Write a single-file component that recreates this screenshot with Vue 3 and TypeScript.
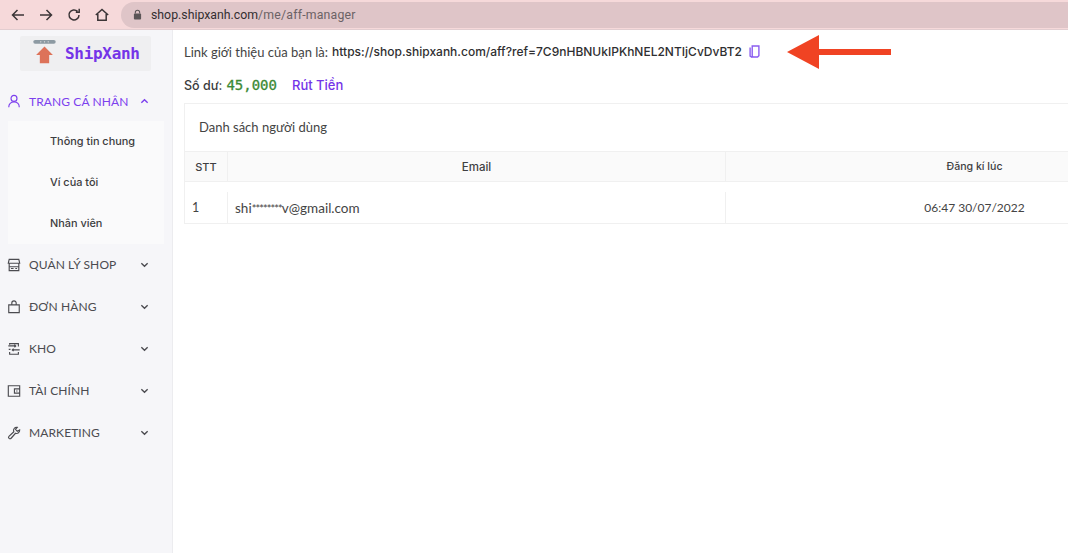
<script setup lang="ts">
const subItems: string[] = ['Thông tin chung', 'Ví của tôi', 'Nhân viên']
const menus: { label: string; icon: string }[] = [
  { label: 'QUẢN LÝ SHOP', icon: 'shop' },
  { label: 'ĐƠN HÀNG', icon: 'bag' },
  { label: 'KHO', icon: 'kho' },
  { label: 'TÀI CHÍNH', icon: 'wallet' },
  { label: 'MARKETING', icon: 'tool' },
]
</script>

<template>
  <div class="page">
    <header class="browser">
      <div class="navs">
        <svg class="nav" viewBox="0 0 16 16"><path d="M14 8H3M7.5 3 2.5 8l5 5" /></svg>
        <svg class="nav" viewBox="0 0 16 16"><path d="M2 8h11M8.5 3l5 5-5 5" /></svg>
        <svg class="nav" viewBox="0 0 16 16"><path d="M13 8a5 5 0 1 1-1.5-3.6M13.2 1.8v3.4H9.8" /></svg>
        <svg class="nav" viewBox="0 0 16 16"><path d="M1.8 8 8 2.5 14.2 8M3.8 7v6.2h8.4V7" /></svg>
      </div>
      <div class="url">
        <svg class="lock" viewBox="0 0 10 12"><path d="M2.6 5V3.6a2.4 2.4 0 0 1 4.8 0V5" fill="none" stroke="#5b5557" stroke-width="1.2" /><rect x="1" y="5" width="8" height="6.5" rx="1" fill="#5b5557" /></svg>
        <span class="host">shop.shipxanh.com</span><span class="path">/me/aff-manager</span>
      </div>
    </header>

    <div class="body">
      <aside class="sidebar">
        <div class="logo">
          <svg class="logo-mark" viewBox="0 0 24 30">
            <rect x="0" y="0" width="24" height="4" rx="2" fill="#8d9aa3" />
            <circle cx="8" cy="2" r=".7" fill="#e8e8e8" /><circle cx="12" cy="2" r=".7" fill="#e8e8e8" /><circle cx="16" cy="2" r=".7" fill="#e8e8e8" />
            <path d="M12 7 21 16H17V25H7V16H3Z" fill="#dd7259" />
          </svg>
          <span class="logo-text">ShipXanh</span>
        </div>

        <nav class="menu">
          <div class="item active">
            <svg class="ic" viewBox="0 0 16 16"><circle cx="8" cy="5" r="3.4" /><path d="M2 15c0-3.700 2.400-5.800 6-5.800s6 2.100 6 5.800" /></svg>
            <span class="label">TRANG CÁ NHÂN</span>
            <svg class="chev" viewBox="0 0 10 10"><path d="M1.500 6.500 5 3l3.500 3.500" /></svg>
          </div>
          <div class="sub">
            <div v-for="s in subItems" :key="s" class="sub-item">{{ s }}</div>
          </div>
          <div v-for="m in menus" :key="m.label" class="item">
            <svg class="ic" viewBox="0 0 16 16">
              <template v-if="m.icon === 'shop'">
                <path d="M2.500 1.500h11l1 4.500h-13zM2.500 6v8.500h11V6M2.500 10h11M4.500 12h3M9.500 12h2" />
              </template>
              <template v-else-if="m.icon === 'bag'">
                <path d="M2 5.500h12v9H2zM5.500 5.500V3.500a2.500 2.500 0 0 1 5 0v2" />
              </template>
              <template v-else-if="m.icon === 'kho'">
                <path d="M3 3V1.800h10V5M1.500 4.500h8.500M8.500 3l1.500 1.500L8.500 6M14.500 9H6M7.500 7.500 6 9l1.500 1.500M2 8.500h2M3 11.500v2.500h10v-2.500" />
              </template>
              <template v-else-if="m.icon === 'wallet'">
                <path d="M1.500 2h13v12h-13zM14.500 5.500H8.500v5h6M10.500 8h1.500" />
              </template>
              <template v-else>
                <path d="M14.500 4.500a3.600 3.600 0 0 1-4.800 3.800L4.700 14a1.600 1.600 0 0 1-2.500-2.200l5.600-5.200A3.600 3.600 0 0 1 11.700 1.500L9.700 3.800l2 2.200Z" />
              </template>
            </svg>
            <span class="label">{{ m.label }}</span>
            <svg class="chev" viewBox="0 0 10 10"><path d="M1.500 3.500 5 7l3.500-3.500" /></svg>
          </div>
        </nav>
      </aside>

      <main class="main">
        <div class="link-row">
          <span class="link-label">Link giới thiệu của bạn là:</span>
          <span class="link-url">https://shop.shipxanh.com/aff?ref=7C9nHBNUkIPKhNEL2NTIjCvDvBT2</span>
          <svg class="copy" viewBox="0 0 12 14"><path d="M3.500 1H10.800V11.500L9.300 13H4.500L3.500 12ZM1.200 2.500V12L3.500 13.500" /></svg>
          <svg class="arrow" viewBox="0 0 104 34"><path d="M0 17 32 0V14H104V20H32V34Z" /></svg>
        </div>

        <div class="balance">
          <span class="bal-label">Số dư:</span>
          <span class="bal-value">45,000</span>
          <span class="withdraw">Rút Tiền</span>
        </div>

        <section class="card">
          <div class="card-title">Danh sách người dùng</div>
          <div class="tbl">
            <div class="row head">
              <div class="c c1">STT</div>
              <div class="c c2">Email</div>
              <div class="c c3">Đăng kí lúc</div>
            </div>
            <div class="row data">
              <div class="c c1">1</div>
              <div class="c c2"><span>shi<span class="stars">********</span>v@gmail.com</span></div>
              <div class="c c3">06:47 30/07/2022</div>
            </div>
          </div>
        </section>
      </main>
    </div>
  </div>
</template>

<style>
html, body { margin: 0; background: #fff; overflow: hidden; }
</style>

<style scoped>
.page {
  width: 1068px;
  height: 553px;
  overflow: hidden;
  display: flex;
  flex-direction: column;
  font-family: "Inter", "Liberation Sans", sans-serif;
  color: #3a3a3c;
}
.browser {
  height: 30px;
  flex: none;
  box-sizing: border-box;
  display: flex;
  align-items: center;
  background: #f6d9da;
  border-bottom: 1px solid #e2cdd0;
  padding-left: 10px;
}
.navs { display: flex; gap: 12px; }
.nav { width: 16px; height: 16px; fill: none; stroke: #3b3537; stroke-width: 1.5; }
.url {
  margin-left: 11px;
  flex: 1;
  height: 26px;
  border-radius: 13px 0 0 13px;
  background: #dfc5c8;
  display: flex;
  align-items: center;
  padding-left: 12px;
  font-size: 12.300px;
  font-family: "Roboto", sans-serif;
}
.lock { width: 9px; height: 11px; margin-right: 9px; }
.host { color: #332e30; }
.path { color: #6b6265; letter-spacing: .2px; }
.body { flex: 1; display: flex; min-height: 0; }
.sidebar {
  width: 173px;
  flex: none;
  box-sizing: border-box;
  background: #f6f6f9;
  border-right: 1px solid #ececef;
  padding-top: 6px;
}
.logo {
  margin-left: 20px;
  width: 131px;
  height: 35px;
  background: #efeff1;
  border-radius: 2px;
  display: flex;
  align-items: center;
  box-sizing: border-box;
  padding-left: 13px;
}
.logo-mark { width: 23px; height: 28px; }
.logo-text {
  margin-left: 9px;
  font-family: "DejaVu Sans Mono", monospace;
  font-weight: 700;
  font-size: 16px;
  letter-spacing: -.3px;
  color: #7434e8;
}
.menu { margin-top: 10px; }
.item {
  height: 42px;
  display: flex;
  align-items: center;
  padding-left: 7px;
  color: #4b4b50;
  font-size: 12px;
  font-family: "Lato", sans-serif;
}
.item.active { color: #7c3fee; height: 40px; }
.ic { width: 14px; height: 14px; fill: none; stroke: currentColor; stroke-width: 1.300; flex: none; }
.label { margin-left: 8px; flex: none; width: 110px; letter-spacing: .1px; }
.chev { width: 9px; height: 9px; margin-left: 1px; fill: none; stroke: currentColor; stroke-width: 1.500; }
.sub { margin-left: 8px; width: 156px; background: #fafafb; display: flex; flex-direction: column; }
.sub-item {
  height: 41.200px;
  flex: none;
  display: flex;
  align-items: center;
  padding-left: 42px;
  font-size: 10.900px;
  font-weight: 500;
  color: #3d3d40;
}
.sub-item:first-child { margin-top: -1px; }
.main { flex: 1; min-width: 0; padding-left: 11px; font-size: 12px; }
.link-row { height: 43px; display: flex; align-items: center; white-space: nowrap; }
.link-label { color: #444; font-size: 13px; font-family: "Lato", sans-serif; }
.link-url { margin-left: 4px; color: #2f2f31; font-weight: 500; font-size: 12px; }
.copy { width: 11px; height: 13px; margin-left: 7px; fill: none; stroke: #8a5cf0; stroke-width: 1.500; }
.arrow { width: 104px; height: 34px; margin-left: 27px; fill: #f04323; }
.balance { height: 26px; display: flex; align-items: center; white-space: nowrap; margin-top: -1px; }
.bal-label { font-size: 12.500px; font-weight: 500; }
.bal-value { margin-left: 4px; font-family: "DejaVu Sans Mono", monospace; font-size: 14px; -webkit-text-stroke: .3px #3c8a35; color: #3c8a35; }
.withdraw { margin-left: 15px; color: #7434e8; font-size: 13px; font-weight: 500; }
.card { margin-top: 5px; border: 1px solid #f0f0f0; border-right: 0; background: #fff; }
.card-title { height: 47px; box-sizing: border-box; padding-bottom: 2px; display: flex; align-items: center; padding-left: 14px; font-size: 13px; font-family: "Lato", sans-serif; color: #444; }
.tbl { width: 100%; }
.row { display: flex; }
.row.head { height: 31px; box-sizing: border-box; background: #fafafa; border-top: 1px solid #f0f0f0; border-bottom: 1px solid #f0f0f0; font-weight: 500; color: #3f3f42; font-size: 11px; }
.row.head .c2 { font-size: 11.500px; }
.row.head .c3 { font-size: 10.600px; }
.row.data { height: 41px; font-size: 13.500px; font-family: "Lato", sans-serif; color: #444; padding-top: 10px; box-sizing: border-box; }
.row.data .c1 { font-size: 12.500px; }
.row.data .c3 { font-size: 12px; }
.stars { font-size: 11px; letter-spacing: -.9px; }
.c { display: flex; align-items: center; box-sizing: border-box; border-right: 1px solid #f0f0f0; }
.c1 { width: 43px; justify-content: center; flex: none; }
.c2 { width: 498px; justify-content: center; flex: none; }
.c3 { width: 497px; justify-content: center; flex: none; border-right: 0; }
.data .c1 { justify-content: flex-start; padding-left: 7px; }
.data .c2 { justify-content: flex-start; padding-left: 7px; }
</style>
